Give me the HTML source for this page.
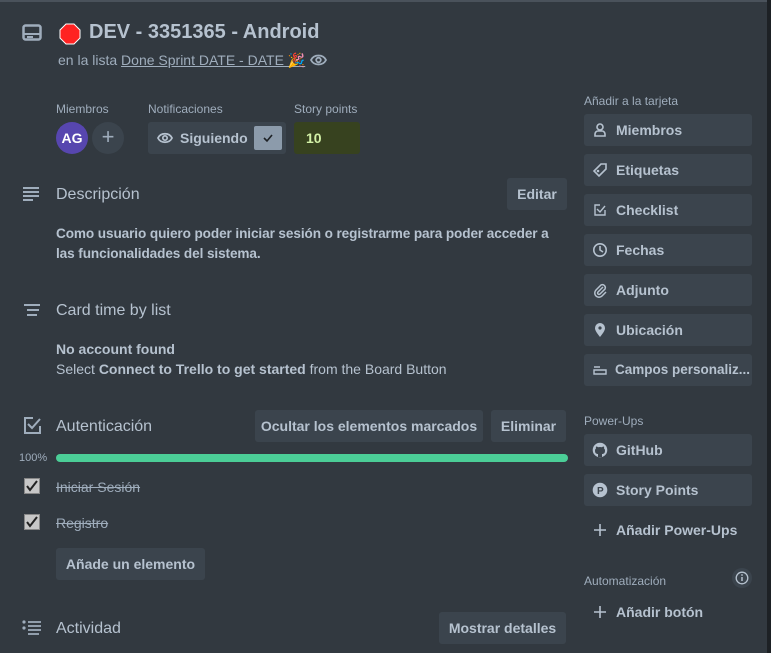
<!DOCTYPE html>
<html><head><meta charset="utf-8"><style>
*{margin:0;padding:0;box-sizing:border-box}
body{width:771px;height:653px;background:#323940;font-family:"Liberation Sans",sans-serif;color:#b6c2cf;position:relative;overflow:hidden;font-size:14px}
.a{position:absolute}
.btn{position:absolute;background:#3b444d;border-radius:3px;height:32px;line-height:32px;font-weight:bold;font-size:14px;color:#b6c2cf;text-align:center}
.sb{position:absolute;left:584px;width:168px;height:32px;background:#3b444d;border-radius:3px;font-weight:bold;font-size:14px;line-height:32px;padding-left:32px;color:#b6c2cf}
.sb svg{position:absolute;left:8px;top:8px}
.lbl{position:absolute;font-size:12px;color:#9fadbc}
.h{position:absolute;font-size:16px;font-weight:bold}
</style></head><body>
<div class="a" style="left:0;top:0;width:771px;height:2px;background:#4a525b"></div>
<div class="a" style="left:767px;top:0;width:4px;height:653px;background:#1d2125"></div>
<svg class="a" style="left:22px;top:24px" width="20" height="18" viewBox="0 0 20 18"><rect x="1.5" y="1.5" width="17" height="14" rx="2" fill="none" stroke="#9fadbc" stroke-width="2.5"/><rect x="2" y="9" width="16" height="2" fill="#9fadbc"/><rect x="5" y="12" width="6" height="2" fill="#9fadbc"/></svg>
<svg class="a" style="left:59px;top:23px" width="22" height="22" viewBox="0 0 22 22"><polygon points="7,1 15,1 21,7 21,15 15,21 7,21 1,15 1,7" fill="#f22" stroke="#fff" stroke-width="1"/></svg>
<div class="a" style="left:89px;top:21px;font-size:20px;font-weight:bold;color:#b6c2cf">DEV - 3351365 - Android</div>
<div class="a" style="left:58px;top:52px;font-size:14px;color:#9fadbc">en la lista <span style="text-decoration:underline">Done Sprint DATE - DATE 🎉</span></div>
<svg class="a" style="left:310px;top:53px" width="17" height="14" viewBox="0 0 17 14"><path d="M1 7C4 1 13 1 16 7C13 13 4 13 1 7Z" fill="none" stroke="#9fadbc" stroke-width="1.8"/><circle cx="8.5" cy="7" r="2.3" fill="none" stroke="#9fadbc" stroke-width="1.8"/></svg>

<div class="lbl" style="left:56px;top:102px">Miembros</div>
<div class="lbl" style="left:148px;top:102px">Notificaciones</div>
<div class="lbl" style="left:294px;top:102px">Story points</div>
<div class="a" style="left:56px;top:122px;width:32px;height:32px;border-radius:50%;background:#5746af;color:#fff;font-weight:bold;font-size:14px;text-align:center;line-height:32px">AG</div>
<div class="a" style="left:92px;top:122px;width:32px;height:32px;border-radius:50%;background:#3b444d;color:#9fadbc;font-size:22px;text-align:center;line-height:30px">+</div>
<div class="a" style="left:148px;top:122px;width:138px;height:32px;background:#3b444d;border-radius:3px"></div>
<svg class="a" style="left:157px;top:131px" width="16" height="14" viewBox="0 0 17 14"><path d="M1 7C4 1 13 1 16 7C13 13 4 13 1 7Z" fill="none" stroke="#b6c2cf" stroke-width="1.8"/><circle cx="8.5" cy="7" r="2.3" fill="none" stroke="#b6c2cf" stroke-width="1.8"/></svg>
<div class="a" style="left:180px;top:130px;font-weight:bold">Siguiendo</div>
<div class="a" style="left:254px;top:126px;width:28px;height:24px;background:#8c9bab;border-radius:2px"></div>
<svg class="a" style="left:262px;top:132px" width="12" height="12" viewBox="0 0 12 12"><path d="M2 6l3 3 5-6" fill="none" stroke="#1d2125" stroke-width="1.6"/></svg>
<div class="a" style="left:294px;top:122px;width:66px;height:32px;background:#37421f;border-radius:3px;color:#d3f1a7;font-weight:bold;line-height:32px;padding-left:12px">10</div>

<svg class="a" style="left:22px;top:186px" width="18" height="16" viewBox="0 0 18 16"><path d="M1 2h16M1 6h16M1 10h16M1 14h10" stroke="#9fadbc" stroke-width="2"/></svg>
<div class="h" style="left:56px;top:186px;font-weight:normal;color:#b6c2cf">Descripción</div>
<div class="btn" style="left:507px;top:178px;width:60px">Editar</div>
<div class="a" style="left:56px;top:224px;font-weight:bold;line-height:20px;white-space:nowrap;font-size:13.6px;letter-spacing:-0.1px">Como usuario quiero poder iniciar sesión o registrarme para poder acceder a<br>las funcionalidades del sistema.</div>

<svg class="a" style="left:24px;top:304px" width="18" height="12" viewBox="0 0 18 12"><path d="M0 1h16M3 6h12M3 11h10" stroke="#9fadbc" stroke-width="2"/></svg>
<div class="h" style="left:56px;top:302px;font-weight:normal">Card time by list</div>
<div class="a" style="left:56px;top:341px;font-weight:bold">No account found</div>
<div class="a" style="left:56px;top:361px">Select <b>Connect to Trello to get started</b> from the Board Button</div>

<svg class="a" style="left:23px;top:416px" width="19" height="19" viewBox="0 0 19 19"><path d="M10 2H2v15h15v-7" fill="none" stroke="#9fadbc" stroke-width="2"/><path d="M5 8l4 4 8-9" fill="none" stroke="#9fadbc" stroke-width="2"/></svg>
<div class="h" style="left:56px;top:418px;font-weight:normal">Autenticación</div>
<div class="btn" style="left:255px;top:410px;width:228px">Ocultar los elementos marcados</div>
<div class="btn" style="left:491px;top:410px;width:75px">Eliminar</div>
<div class="a" style="left:19px;top:452px;font-size:11px;color:#9fadbc">100%</div>
<div class="a" style="left:56px;top:454px;width:512px;height:8px;border-radius:4px;background:#4bce97"></div>
<div class="a" style="left:24px;top:478px;width:16px;height:16px;background:#c7c7c7;border:1px solid #888"></div>
<svg class="a" style="left:26px;top:480px" width="12" height="12" viewBox="0 0 12 12"><path d="M1 6l3 4 7-9" fill="none" stroke="#222" stroke-width="2"/></svg>
<div class="a" style="left:56px;top:479px;text-decoration:line-through;color:#9fadbc">Iniciar Sesión</div>
<div class="a" style="left:24px;top:514px;width:16px;height:16px;background:#c7c7c7;border:1px solid #888"></div>
<svg class="a" style="left:26px;top:516px" width="12" height="12" viewBox="0 0 12 12"><path d="M1 6l3 4 7-9" fill="none" stroke="#222" stroke-width="2"/></svg>
<div class="a" style="left:56px;top:515px;text-decoration:line-through;color:#9fadbc">Registro</div>
<div class="btn" style="left:56px;top:548px;width:149px">Añade un elemento</div>

<svg class="a" style="left:22px;top:620px" width="20" height="16" viewBox="0 0 20 16"><circle cx="2" cy="2" r="1.6" fill="#9fadbc"/><circle cx="2" cy="8" r="1.6" fill="#9fadbc"/><path d="M6 2h13M6 6h13M6 10h13M6 14h11" stroke="#9fadbc" stroke-width="1.8"/></svg>
<div class="h" style="left:56px;top:620px;font-weight:normal">Actividad</div>
<div class="btn" style="left:439px;top:612px;width:127px">Mostrar detalles</div>

<div class="lbl" style="left:584px;top:94px">Añadir a la tarjeta</div>
<div class="sb" style="top:114px"><svg width="16" height="16" viewBox="0 0 16 16"><circle cx="8" cy="5" r="3" fill="none" stroke="#b6c2cf" stroke-width="1.6"/><path d="M3 14v-2a3 3 0 0 1 3-3h4a3 3 0 0 1 3 3v2z" fill="none" stroke="#b6c2cf" stroke-width="1.6"/></svg>Miembros</div>
<div class="sb" style="top:154px"><svg width="16" height="16" viewBox="0 0 16 16"><path d="M9 2h5v5l-7 7-5-5z" fill="none" stroke="#b6c2cf" stroke-width="1.6"/><circle cx="6" cy="9" r="1.3" fill="#b6c2cf"/></svg>Etiquetas</div>
<div class="sb" style="top:194px"><svg width="16" height="16" viewBox="0 0 16 16"><path d="M8 3H3v10h10V8" fill="none" stroke="#b6c2cf" stroke-width="1.4"/><path d="M5 7l3 3 5-6" fill="none" stroke="#b6c2cf" stroke-width="1.4"/></svg>Checklist</div>
<div class="sb" style="top:234px"><svg width="16" height="16" viewBox="0 0 16 16"><circle cx="8" cy="8" r="6.2" fill="none" stroke="#b6c2cf" stroke-width="1.6"/><path d="M8 4v4l3 2" fill="none" stroke="#b6c2cf" stroke-width="1.6"/></svg>Fechas</div>
<div class="sb" style="top:274px"><svg width="16" height="16" viewBox="0 0 16 16"><path d="M11 5l-5 5a1.4 1.4 0 0 0 2 2l5-5a3 3 0 0 0-4-4l-5 5a4 4 0 0 0 6 6l4-4" fill="none" stroke="#b6c2cf" stroke-width="1.5"/></svg>Adjunto</div>
<div class="sb" style="top:314px"><svg width="16" height="16" viewBox="0 0 16 16"><path d="M8 15C4 10 3 8 3 6a5 5 0 0 1 10 0c0 2-1 4-5 9z" fill="#b6c2cf"/><circle cx="8" cy="6" r="1.6" fill="#3b444d"/></svg>Ubicación</div>
<div class="sb" style="top:354px;padding-left:31px;font-size:13.5px"><svg width="16" height="16" viewBox="0 0 16 16"><path d="M2 5h6M2 8h12v4H2z" fill="none" stroke="#b6c2cf" stroke-width="1.4"/></svg>Campos personaliz...</div>

<div class="lbl" style="left:584px;top:414px">Power-Ups</div>
<div class="sb" style="top:434px"><svg width="16" height="16" viewBox="0 0 16 16"><circle cx="8" cy="8" r="7.3" fill="#b6c2cf"/><path d="M6 15v-3c-2 0-3-1-3-3.5 0-1 .3-1.5 1-2-.2-.6-.2-1.5.1-2 1 0 1.6.5 2 .8a6 6 0 0 1 3.8 0c.4-.3 1-.8 2-.8.3.5.3 1.4.1 2 .7.5 1 1 1 2 0 2.5-1 3.5-3 3.5v3z" fill="#3b444d"/></svg>GitHub</div>
<div class="sb" style="top:474px"><svg width="16" height="16" viewBox="0 0 16 16"><circle cx="8" cy="8" r="7.3" fill="#b6c2cf"/><text x="5" y="12" font-size="10" font-weight="bold" fill="#3b444d" font-family="Liberation Sans">P</text></svg>Story Points</div>
<div class="sb" style="top:514px;background:none"><svg width="16" height="16" viewBox="0 0 16 16"><path d="M8 2v12M2 8h12" stroke="#b6c2cf" stroke-width="1.6"/></svg>Añadir Power-Ups</div>
<div class="lbl" style="left:584px;top:574px">Automatización</div>
<div class="a" style="left:732px;top:568px;width:20px;height:20px;border-radius:50%;background:#3b444d"></div>
<svg class="a" style="left:735px;top:571px" width="14" height="14" viewBox="0 0 14 14"><circle cx="7" cy="7" r="5.8" fill="none" stroke="#b6c2cf" stroke-width="1.3"/><path d="M7 6v4" stroke="#b6c2cf" stroke-width="1.5"/><circle cx="7" cy="4" r=".9" fill="#b6c2cf"/></svg>
<div class="sb" style="top:596px;background:none"><svg width="16" height="16" viewBox="0 0 16 16"><path d="M8 2v12M2 8h12" stroke="#b6c2cf" stroke-width="1.6"/></svg>Añadir botón</div>
</body></html>
